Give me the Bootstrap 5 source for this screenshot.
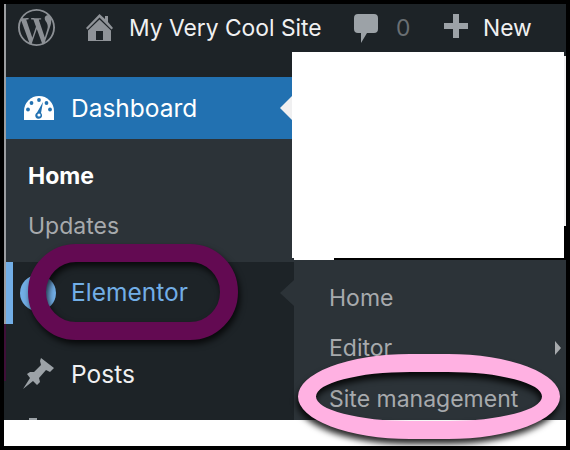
<!DOCTYPE html>
<html lang="en">
<head>
<meta charset="utf-8">
<title>WP admin menu</title>
<link href="https://cdn.jsdelivr.net/npm/bootstrap@5.3.0/dist/css/bootstrap.min.css" rel="stylesheet">
<style>
html,body{margin:0;background:#000;}
body{width:570px;height:450px;overflow:hidden;font-family:"Inter","Liberation Sans",sans-serif;}
.shot-frame{position:relative;width:570px;height:450px;padding:4px;background:#000;}
.shot-inner{width:562px;height:442px;}
.adminbar{height:73px;background:#1d2327;color:#f0f0f1;font-size:22.8px;line-height:27px;padding-top:10px;border-left:2px solid #9b9da0;}
.adminbar svg{display:block;flex:none;}
.bar-item{height:27px;}
.ic-wp{margin-left:12px;margin-top:-5px;}
.ic-home{margin-left:31px;}
.site-name{margin-left:16px;width:225px;}
.count{margin-left:18px;color:#6a6f73;width:48px;}
.new-lbl{margin-left:15px;}
.body-row{height:343px;}
.edge-strip{width:2px;}
.edge-a{height:247px;background:#9b9da0;}
.edge-b{height:57px;background:#3f0f38;}
.edge-c{flex:1;background:#1d2327;}
.side-col{width:288px;background:#1d2327;overflow:hidden;}
.item-current{height:62px;background:#2271b1;color:#fff;font-size:24.5px;position:relative;}
.item-current svg{margin-left:18px;}
.lbl{margin-left:17px;line-height:1;}
.pointer-w{position:absolute;right:2px;top:19px;width:0;height:0;border-top:12px solid transparent;border-bottom:12px solid transparent;border-right:12px solid #f0f0f1;}
.submenu-open{height:123px;background:#2c3338;font-size:23px;padding-left:22px;}
.sub-a{height:50px;color:#fff;font-weight:700;padding-top:25px;line-height:24px;}
.sub-b{color:#a7aaad;padding-top:25px;line-height:24px;}
.item-el{height:62px;color:#72aee6;font-size:24.5px;position:relative;border-left:7px solid #72aee6;}
.item-el svg{margin-left:7px;}
.item-el .lbl{margin-left:15px;margin-top:-1px;}
.pointer-f{position:absolute;right:0;top:18px;width:0;height:0;border-top:13.500px solid transparent;border-bottom:13.500px solid transparent;border-right:14px solid #2c3338;}
.item-post{height:94px;flex:none;color:#f0f0f1;font-size:24.5px;padding-top:34px;}
.item-post svg{margin-left:17px;}
.item-post .lbl{margin-left:17px;}
.peek-ic{width:8px;height:2px;background:#9ca2a7;margin:0 0 0 23px;flex:none;}
.right-col{width:272px;}
.gap-top{height:183px;background:#000;}
.flyout{height:160px;background:#2c3338;color:#a7aaad;font-size:23px;line-height:26px;padding-left:35px;position:relative;}
.fly-a{padding-top:25px;height:63px;}
.fly-b{height:50px;padding-top:12px;}
.fly-c{padding-top:13px;}
.fly-caret{position:absolute;left:261px;top:81px;width:0;height:0;border-top:7px solid transparent;border-bottom:7px solid transparent;border-left:6px solid #a7aaad;}
.foot-white{height:26px;background:#fff;}
.redact{position:absolute;left:292px;top:52px;width:272px;height:206px;background:#fff;}
.redact::after{content:"";position:absolute;left:272px;top:4px;width:2px;height:170px;background:#f0f0f1;}
.redact::before{content:"";position:absolute;left:2px;top:206px;width:40px;height:2px;background:#fff;}
.ring-p{position:absolute;left:28px;top:244px;width:210px;height:96px;border:18px solid #630a52;border-radius:48px;filter:drop-shadow(2px 4px 3px rgba(0,0,0,.75));}
.ring-k{position:absolute;left:298px;top:354px;width:262px;height:85px;border:18px solid #ffb1e2;border-radius:112px/42.5px;filter:drop-shadow(-1px 5px 3px rgba(0,0,0,.85));}
</style>
</head>
<body>
<div class="shot-frame">
  <div class="shot-inner d-flex flex-column">
    <div class="adminbar d-flex align-items-start">
      <svg class="ic-wp" width="37" height="37" viewBox="0 0 24 24" fill="#8c9095"><path d="M21.469 6.825c.84 1.537 1.318 3.3 1.318 5.175 0 3.979-2.156 7.456-5.363 9.325l3.295-9.527c.615-1.54.82-2.771.82-3.864 0-.405-.026-.78-.07-1.11m-7.981.105c.647-.03 1.232-.105 1.232-.105.582-.075.514-.93-.067-.899 0 0-1.755.135-2.88.135-1.064 0-2.85-.15-2.85-.15-.585-.03-.661.855-.075.885 0 0 .54.061 1.125.09l1.68 4.605-2.37 7.08L5.354 6.9c.649-.03 1.234-.1 1.234-.1.585-.075.516-.93-.065-.896 0 0-1.746.138-2.874.138-.2 0-.438-.008-.69-.015C4.911 3.15 8.235 1.215 12 1.215c2.809 0 5.365 1.072 7.286 2.833-.046-.003-.091-.009-.141-.009-1.06 0-1.812.923-1.812 1.914 0 .89.513 1.643 1.06 2.531.411.72.89 1.643.89 2.977 0 .915-.354 1.994-.821 3.479l-1.075 3.585-3.9-11.61.001.014zM12 22.784c-1.059 0-2.081-.153-3.048-.437l3.237-9.406 3.315 9.087c.024.053.05.101.078.149-1.12.393-2.325.609-3.582.609M1.211 12c0-1.564.336-3.05.935-4.39L7.29 21.709C3.694 19.96 1.212 16.271 1.211 12M12 0C5.385 0 0 5.385 0 12s5.385 12 12 12 12-5.385 12-12S18.615 0 12 0"/></svg>
      <svg class="ic-home" width="27" height="27" viewBox="0 0 27 27" fill="#8f9398"><path fill-rule="evenodd" d="M13.500 0 19 5V2h3v6l5 6-1.500 1.500L13.500 3.500 1.500 15.500 0 14zM13.500 5.500 25 16.500V27H2V16.500zM10 17v9h7v-9z"/></svg>
      <span class="site-name bar-item">My Very Cool Site</span>
      <svg width="24" height="29" viewBox="0 0 24 29" fill="#9ca2a7"><path d="M4 0H20Q24 0 24 4V15Q24 19 20 19H13L7 29V19H4Q0 19 0 15V4Q0 0 4 0Z"/></svg>
      <span class="count bar-item">0</span>
      <svg width="24" height="24" viewBox="0 0 24 24" fill="#9ca2a7"><path d="M9 0H15V9H24V15H15V24H9V15H0V9H9Z"/></svg>
      <span class="new-lbl bar-item">New</span>
    </div>
    <div class="body-row d-flex">
      <div class="edge-strip d-flex flex-column"><span class="edge-a"></span><span class="edge-b"></span><span class="edge-c"></span></div>
      <div class="side-col d-flex flex-column">
        <div class="item-current d-flex align-items-center">
          <svg width="30" height="24" viewBox="0 0 30 24"><path fill="#fff" d="M0 24V15A15 15 0 0 1 30 15V24Z"/><g fill="#2271b1"><circle cx="15" cy="4" r="1.900"/><circle cx="7.500" cy="7" r="1.900"/><circle cx="22.500" cy="7" r="1.900"/><circle cx="4" cy="13.500" r="1.900"/><circle cx="26" cy="13.500" r="1.900"/><path d="M19 6l-2 11a3.400 3.400 0 1 1-4-.5z"/></g><circle cx="15" cy="19" r="1.600" fill="#fff"/></svg>
          <span class="lbl">Dashboard</span>
          <span class="pointer-w"></span>
        </div>
        <div class="submenu-open">
          <div class="sub-a">Home</div>
          <div class="sub-b">Updates</div>
        </div>
        <div class="item-el d-flex align-items-center">
          <svg width="36" height="36" viewBox="0 0 36 36"><circle cx="18" cy="18" r="18" fill="#72aee6"/><path fill="#1d2327" d="M12 10h3v16h-3zM18 10h7v3h-7zM18 16.500h7v3h-7zM18 23h7v3h-7z"/></svg>
          <span class="lbl">Elementor</span>
          <span class="pointer-f"></span>
        </div>
        <div class="item-post d-flex align-items-start">
          <svg width="31" height="31" viewBox="0 0 31 31" fill="#9ca2a7"><path d="M18 0 31 10 27 14 23 12 16 20 17 24 14 27 10 23 0 31 7 20 4 16 7 14 11 14 18 7 17 3Z"/></svg>
          <span class="lbl mt-1">Posts</span>
        </div>
        <div class="peek-ic"></div>
      </div>
      <div class="right-col d-flex flex-column">
        <div class="gap-top"></div>
        <div class="flyout">
          <div class="fly-a">Home</div>
          <div class="fly-b">Editor</div>
          <div class="fly-c">Site management</div>
          <span class="fly-caret"></span>
        </div>
      </div>
    </div>
    <div class="foot-white"></div>
  </div>
  <div class="redact"></div>
  <div class="ring-p"></div>
  <div class="ring-k"></div>
</div>
<script src="https://cdn.jsdelivr.net/npm/bootstrap@5.3.0/dist/js/bootstrap.bundle.min.js"></script>
</body>
</html>
